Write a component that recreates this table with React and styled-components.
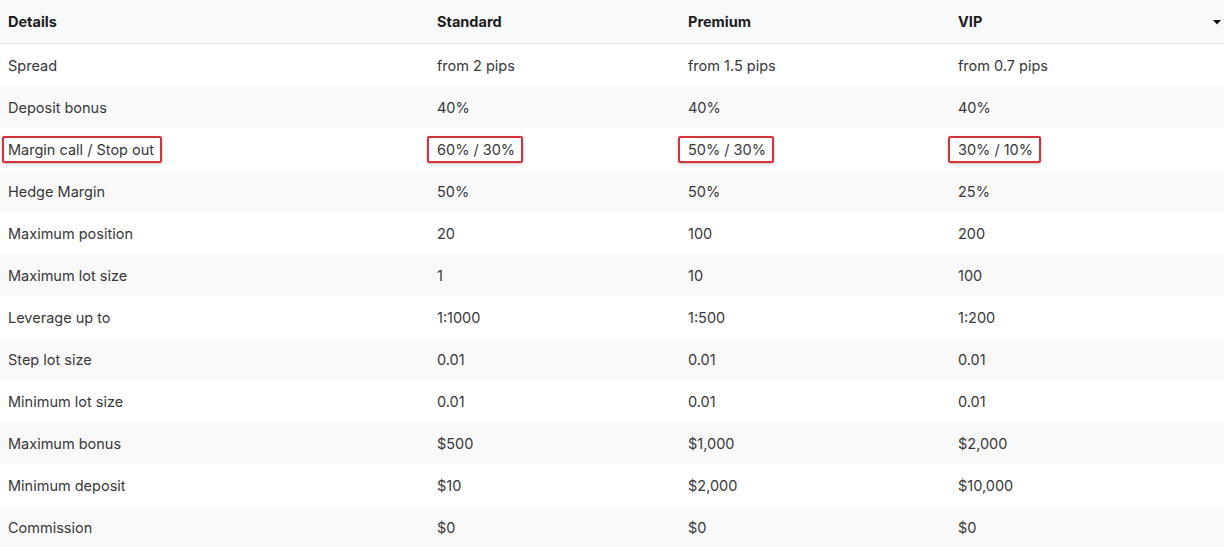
import React from 'react'
import styled, {createGlobalStyle} from 'styled-components'

const GlobalStyle = createGlobalStyle`
  body {
    margin: 0;
    background: #ffffff;
    font-family: Inter, "Open Sans", sans-serif;
  }
`

const columns = ['Details', 'Standard', 'Premium', 'VIP']

const rows = [
  ['Spread', 'from 2 pips', 'from 1.5 pips', 'from 0.7 pips'],
  ['Deposit bonus', '40%', '40%', '40%'],
  ['Margin call / Stop out', '60% / 30%', '50% / 30%', '30% / 10%'],
  ['Hedge Margin', '50%', '50%', '25%'],
  ['Maximum position', '20', '100', '200'],
  ['Maximum lot size', '1', '10', '100'],
  ['Leverage up to', '1:1000', '1:500', '1:200'],
  ['Step lot size', '0.01', '0.01', '0.01'],
  ['Minimum lot size', '0.01', '0.01', '0.01'],
  ['Maximum bonus', '$500', '$1,000', '$2,000'],
  ['Minimum deposit', '$10', '$2,000', '$10,000'],
  ['Commission', '$0', '$0', '$0'],
]

const highlighted = 'Margin call / Stop out'

const Table = styled.div`
  width: 1224px;
  display: flex;
  flex-direction: column;
`

const Row = styled.div`
  display: grid;
  grid-template-columns: 429px 251px 270px 1fr;
  height: 42px;
  align-items: center;
  background: ${p => (p.$striped ? '#f9f9f9' : '#ffffff')};
`

const HeadRow = styled(Row)`
  height: 43px;
  background: #f8f9fb;
  border-bottom: 1px solid #e3e5e8;
`

const Cell = styled.div`
  padding-left: 8px;
  font-size: 14.5px;
  color: #383838;
  white-space: nowrap;
`

const HeadCell = styled(Cell)`
  font-weight: 700;
  color: #1c1c1c;
  display: flex;
  align-items: center;
  justify-content: space-between;
  padding-right: 3px;
`

const Mark = styled.span`
  display: inline-block;
  margin-left: ${p => (p.$first ? '-6px' : '-10px')};
  padding: 3px 6px 3px ${p => (p.$first ? '4px' : '8px')};
  border: 2px solid #d6323c;
  border-radius: 2px;
  box-shadow: 0 1px 3px rgba(0, 0, 0, 0.25);
`

const Caret = () => (
  <svg width="8" height="6" viewBox="0 0 8 6">
    <path d="M0 1 L8 1 L4 5.5 Z" fill="#111" />
  </svg>
)

export default function App() {
  return (
    <>
      <GlobalStyle />
      <Table>
        <HeadRow>
          {columns.map((c, i) => (
            <HeadCell key={c}>
              {c}
              {i === columns.length - 1 && <Caret />}
            </HeadCell>
          ))}
        </HeadRow>
        {rows.map((r, ri) => (
          <Row key={r[0]} $striped={ri % 2 === 1}>
            {r.map((v, ci) => (
              <Cell key={ci}>
                {r[0] === highlighted ? <Mark $first={ci === 0}>{v}</Mark> : v}
              </Cell>
            ))}
          </Row>
        ))}
      </Table>
    </>
  )
}
